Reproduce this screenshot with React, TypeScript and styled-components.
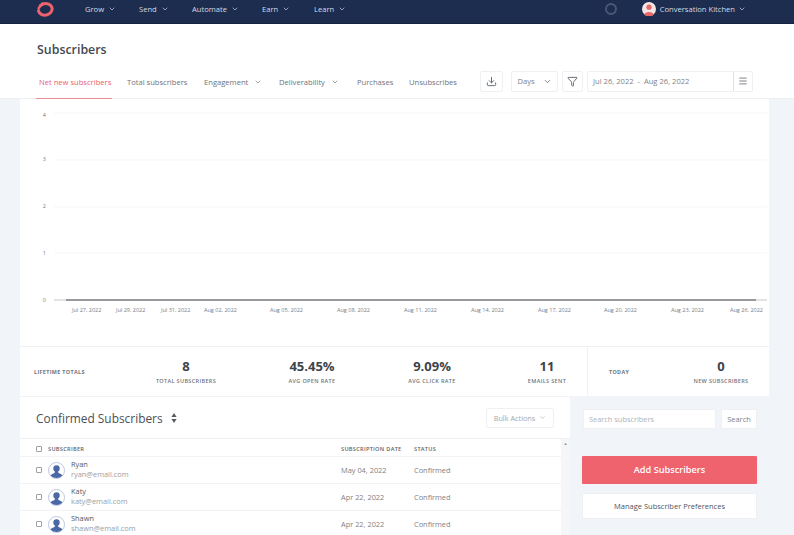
import React from 'react';
import styled, { createGlobalStyle } from 'styled-components';
import { ChevronDown, Download, Filter, Menu } from 'lucide-react';

const GlobalStyle = createGlobalStyle`
  html, body {
    margin: 0;
    padding: 0;
    background: #f1f5f9;
    font-family: "Open Sans", "Liberation Sans", sans-serif;
    overflow: hidden;
  }
  * { box-sizing: border-box; }
  svg { flex: none; }
`;

const Page = styled.div`
  width: 794px;
  height: 535px;
  overflow: hidden;
  background: #f1f5f9;
`;

const TopBar = styled.div`
  height: 24px;
  background: #1d2d4f;
  border-bottom: 1px solid #15223e;
  display: flex;
  align-items: center;
  padding: 0 48px 5px 36px;
  color: #d5dae3;
  font-size: 7.6px;
  font-weight: 500;
`;

const NavItem = styled.span<{ $width: number }>`
  display: flex;
  align-items: center;
  gap: 4px;
  width: ${({ $width }) => $width}px;
  white-space: nowrap;
`;

const NavList = styled.div`
  display: flex;
  margin-left: 31px;
`;

const Account = styled.div`
  display: flex;
  align-items: center;
  margin-left: auto;
`;

const Spinner = styled.svg`
  margin-right: 24px;
`;

const AccountName = styled.span`
  margin: 0 3px 0 4px;
  white-space: nowrap;
`;

const Header = styled.header`
  height: 75px;
  background: #fff;
  border-bottom: 1px solid #edf0f3;
  padding: 17px 0 0 36px;
`;

const Title = styled.h1`
  margin: 0 0 0 1px;
  height: 17px;
  font-size: 12.4px;
  line-height: 17px;
  font-weight: 600;
  color: #444a52;
`;

const TabRow = styled.div`
  display: flex;
  align-items: center;
  height: 41px;
`;

const Tab = styled.span<{ $active?: boolean; $width: number }>`
  display: flex;
  align-items: center;
  gap: 6px;
  flex: none;
  width: ${({ $width }) => $width}px;
  height: 41px;
  margin-right: ${({ $active }) => ($active ? 15 : 0)}px;
  padding: 7px 0 0 ${({ $active }) => ($active ? 3 : 0)}px;
  font-size: 7.6px;
  white-space: nowrap;
  color: ${({ $active }) => ($active ? '#e9626f' : '#6d737b')};
  border-bottom: 1px solid ${({ $active }) => ($active ? '#ef8d97' : 'transparent')};
`;

const Tools = styled.div`
  display: flex;
  align-items: center;
  height: 24px;
  margin-top: 5px;
  margin-left: 11px;
`;

const ToolBox = styled.div<{ $width: number; $left: number }>`
  width: ${({ $width }) => $width}px;
  margin-left: ${({ $left }) => $left}px;
  height: 21px;
  background: #fff;
  border: 1px solid #eef0f2;
  border-radius: 2px;
  display: flex;
  align-items: center;
  justify-content: center;
  gap: 8px;
  font-size: 7.6px;
  color: #7d838a;
  white-space: nowrap;
`;

const DateBox = styled(ToolBox)`
  justify-content: space-between;
  padding-left: 5px;
`;

const DateMenu = styled.span`
  width: 19px;
  height: 100%;
  border-left: 1px solid #dfe2e5;
  display: flex;
  align-items: center;
  justify-content: center;
  color: #666c74;
`;

const Main = styled.main`
  width: 749px;
  margin-left: 20px;
`;

const ChartPanel = styled.section`
  height: 247px;
  background: #fff;
`;

const Chart = styled.svg`
  display: block;
  font-family: "Open Sans", "Liberation Sans", sans-serif;
  font-size: 5.5px;
  fill: #777d84;
`;

const Stats = styled.section`
  height: 51px;
  background: #fff;
  border-top: 1px solid #eef1f4;
  border-bottom: 1px solid #f1f3f6;
  display: flex;
`;

const StatLabelCell = styled.div<{ $width: number; $left: number }>`
  width: ${({ $width }) => $width}px;
  padding-left: ${({ $left }) => $left}px;
  padding-top: 21px;
  font-size: 5.4px;
  font-weight: 700;
  letter-spacing: 0.35px;
  color: #6f757c;
  white-space: nowrap;
`;

const Stat = styled.div<{ $width: number; $left?: number }>`
  width: ${({ $width }) => $width}px;
  margin-left: ${({ $left }) => $left ?? 0}px;
  text-align: center;
  padding-top: 11px;
`;

const StatValue = styled.div`
  font-size: 13px;
  line-height: 17px;
  font-weight: 700;
  color: #3e444b;
`;

const StatName = styled.div`
  margin-top: 2px;
  font-size: 5.5px;
  line-height: 8px;
  font-weight: 600;
  letter-spacing: 0.35px;
  color: #6f757c;
  white-space: nowrap;
`;

const TodayGroup = styled.div`
  display: flex;
  flex: 1;
  border-left: 1px solid #eef1f4;
`;

const Lower = styled.section`
  display: flex;
  height: 138px;
`;

const ListPanel = styled.div`
  width: 550px;
  background: #fff;
`;

const ListHead = styled.div`
  height: 42px;
  display: flex;
  align-items: center;
  justify-content: space-between;
  padding: 0 16px;
  border-bottom: 1px solid #eef1f4;
`;

const ListTitle = styled.h2`
  margin: 0;
  display: flex;
  align-items: center;
  gap: 8px;
  font-size: 11.9px;
  font-weight: 400;
  color: #4a5058;
`;

const BulkButton = styled.div`
  width: 68px;
  height: 20px;
  border: 1px solid #eef0f2;
  border-radius: 2px;
  display: flex;
  align-items: center;
  justify-content: center;
  gap: 4px;
  font-size: 7.3px;
  color: #a3a8ae;
`;

const TableWrap = styled.div`
  display: flex;
`;

const Table = styled.div`
  width: 541px;
`;

const Scrollbar = styled.div`
  width: 9px;
  height: 96px;
  background: #f5f6f8;
  color: #8b9096;
  font-size: 4px;
  line-height: 9px;
  text-align: center;
`;

const Row = styled.div<{ $head?: boolean }>`
  display: grid;
  grid-template-columns: 321px 73px 1fr;
  align-items: center;
  height: ${({ $head }) => ($head ? 18 : 27)}px;
  padding-top: ${({ $head }) => ($head ? 2 : 0)}px;
  border-bottom: 1px solid #f1f3f5;
  font-size: ${({ $head }) => ($head ? 5.6 : 7.4)}px;
  font-weight: ${({ $head }) => ($head ? 600 : 400)};
  letter-spacing: ${({ $head }) => ($head ? 0.3 : 0)}px;
  color: ${({ $head }) => ($head ? '#5d6369' : '#7c8187')};
  white-space: nowrap;
`;

const Person = styled.div`
  display: flex;
  align-items: center;
  padding-left: 16px;
`;

const Check = styled.span`
  width: 6px;
  height: 6px;
  flex: none;
  border: 1px solid #9ca1a7;
  border-radius: 1px;
  margin-right: 6px;
`;

const Name = styled.div`
  font-size: 7.4px;
  line-height: 10.5px;
  color: #53585f;
`;

const Email = styled.div`
  font-size: 7.4px;
  line-height: 10.5px;
  color: #999ea4;
`;

const PersonText = styled.div`
  margin: 0 0 2px 6px;
`;

const Side = styled.aside`
  flex: 1;
  padding: 12px 12px 0 12px;
`;

const SearchRow = styled.div`
  display: flex;
  gap: 5px;
  padding-left: 1px;
`;

const SearchInput = styled.div`
  width: 133px;
  height: 20px;
  background: #fff;
  border: 1px solid #eef0f2;
  padding-left: 5px;
  font-size: 7.4px;
  line-height: 18px;
  color: #aeb3b8;
`;

const SearchButton = styled.div`
  width: 36px;
  height: 20px;
  background: #fff;
  border: 1px solid #eef0f2;
  text-align: center;
  font-size: 7.4px;
  line-height: 18px;
  color: #7c8187;
`;

const AddButton = styled.div`
  height: 28px;
  margin-top: 27px;
  background: #ef636f;
  border-radius: 1px;
  text-align: center;
  font-size: 9.2px;
  font-weight: 600;
  line-height: 28px;
  color: #fff;
`;

const ManageButton = styled.div`
  height: 26px;
  margin-top: 9px;
  background: #fff;
  border: 1px solid #eef0f2;
  text-align: center;
  font-size: 7.5px;
  font-weight: 500;
  line-height: 24px;
  color: #50565d;
`;

function Logo() {
  return (
    <svg width="18" height="18" viewBox="0 0 18 18" fill="none">
      <g transform="rotate(-14 9 9.5)">
        <path d="M5.4 4.6 A6.9 5.8 0 1 1 2.4 9" stroke="#ee626e" strokeWidth="3" strokeLinecap="round" />
      </g>
      <path d="M2.6 8.2 L6.6 3.2" stroke="#ee626e" strokeWidth="2.4" strokeLinecap="round" />
    </svg>
  );
}

function Avatar() {
  return (
    <svg width="14" height="14" viewBox="0 0 14 14">
      <circle cx="7" cy="7" r="7" fill="#f3e6e4" />
      <circle cx="7" cy="5.2" r="2.6" fill="#e8686a" />
      <path d="M2 12.5 C3 9 11 9 12 12.5 A7 7 0 0 1 2 12.5 Z" fill="#e8686a" />
    </svg>
  );
}

function UserIcon() {
  return (
    <svg width="17" height="17" viewBox="0 0 17 17">
      <circle cx="8.5" cy="8.5" r="8" fill="#fff" stroke="#9fb0d0" strokeWidth="0.7" />
      <circle cx="8.5" cy="6.4" r="3.2" fill="#4a68a5" />
      <path d="M7 9 L10 9 L10.4 11 C12.5 11.6 14 12.6 14.4 13.5 A8 8 0 0 1 2.6 13.5 C3 12.6 4.5 11.6 6.6 11 Z" fill="#4a68a5" />
    </svg>
  );
}

// y is the grid line, labelY the tick label centre; they drift apart near the top
const yTicks = [
  { label: '4', y: 14, labelY: 16 },
  { label: '3', y: 61, labelY: 60 },
  { label: '2', y: 108, labelY: 107 },
  { label: '1', y: 154, labelY: 154 },
  { label: '0', y: 201, labelY: 201 },
];

const xTicks = [
  { label: 'Jul 27, 2022', x: 52 },
  { label: 'Jul 29, 2022', x: 96 },
  { label: 'Jul 31, 2022', x: 141 },
  { label: 'Aug 02, 2022', x: 184 },
  { label: 'Aug 05, 2022', x: 250 },
  { label: 'Aug 08, 2022', x: 317 },
  { label: 'Aug 11, 2022', x: 384 },
  { label: 'Aug 14, 2022', x: 451 },
  { label: 'Aug 17, 2022', x: 518 },
  { label: 'Aug 20, 2022', x: 584 },
  { label: 'Aug 23, 2022', x: 651 },
  { label: 'Aug 26, 2022', x: 710 },
];

function SubscriberChart() {
  return (
    <Chart width="749" height="247" viewBox="0 0 749 247">
      {yTicks.map((t) => (
        <g key={t.label}>
          <text x="26" y={t.labelY + 2} textAnchor="end">{t.label}</text>
          <line x1="34" x2="747" y1={t.y} y2={t.y} stroke={t.label === '0' ? '#c4c6c9' : '#f1f2f4'} strokeWidth={t.label === '0' ? 1 : 0.7} />
        </g>
      ))}
      <line x1="46" x2="736" y1="201" y2="201" stroke="#7f8184" strokeWidth="1.6" />
      {xTicks.map((t) => (
        <text key={t.label} x={t.x} y="213">{t.label}</text>
      ))}
    </Chart>
  );
}

const subscribers = [
  { name: 'Ryan', email: 'ryan@email.com', date: 'May 04, 2022' },
  { name: 'Katy', email: 'katy@email.com', date: 'Apr 22, 2022' },
  { name: 'Shawn', email: 'shawn@email.com', date: 'Apr 22, 2022' },
];

export default function App() {
  return (
    <Page>
      <GlobalStyle />
      <TopBar>
        <Logo />
        <NavList>
          <NavItem $width={54}>Grow <ChevronDown size={8} /></NavItem>
          <NavItem $width={53}>Send <ChevronDown size={8} /></NavItem>
          <NavItem $width={70}>Automate <ChevronDown size={8} /></NavItem>
          <NavItem $width={52}>Earn <ChevronDown size={8} /></NavItem>
          <NavItem $width={40}>Learn <ChevronDown size={8} /></NavItem>
        </NavList>
        <Account>
          <Spinner width="14" height="14" viewBox="0 0 14 14" fill="none">
            <circle cx="7" cy="7" r="5" stroke="#4a5874" strokeWidth="2" />
          </Spinner>
          <Avatar />
          <AccountName>Conversation Kitchen</AccountName>
          <ChevronDown size={8} />
        </Account>
      </TopBar>
      <Header>
        <Title>Subscribers</Title>
        <TabRow>
          <Tab $active $width={76}>Net new subscribers</Tab>
          <Tab $width={77}>Total subscribers</Tab>
          <Tab $width={75}>Engagement <ChevronDown size={8} /></Tab>
          <Tab $width={78}>Deliverability <ChevronDown size={8} /></Tab>
          <Tab $width={52}>Purchases</Tab>
          <Tab $width={60}>Unsubscribes</Tab>
          <Tools>
            <ToolBox $width={23} $left={0}><Download size={11} color="#5d636a" /></ToolBox>
            <ToolBox $width={47} $left={8}>Days <ChevronDown size={9} color="#5d636a" /></ToolBox>
            <ToolBox $width={21} $left={4}><Filter size={11} color="#5d636a" /></ToolBox>
            <DateBox $width={166} $left={4}>
              Jul 26, 2022 &nbsp;-&nbsp; Aug 26, 2022
              <DateMenu><Menu size={10} /></DateMenu>
            </DateBox>
          </Tools>
        </TabRow>
      </Header>
      <Main>
        <ChartPanel>
          <SubscriberChart />
        </ChartPanel>
        <Stats>
          <StatLabelCell $width={95} $left={14}>LIFETIME TOTALS</StatLabelCell>
          <Stat $width={142}><StatValue>8</StatValue><StatName>TOTAL SUBSCRIBERS</StatName></Stat>
          <Stat $width={110}><StatValue>45.45%</StatValue><StatName>AVG OPEN RATE</StatName></Stat>
          <Stat $width={130}><StatValue>9.09%</StatValue><StatName>AVG CLICK RATE</StatName></Stat>
          <Stat $width={80} $left={10}><StatValue>11</StatValue><StatName>EMAILS SENT</StatName></Stat>
          <TodayGroup>
            <StatLabelCell $width={101} $left={21}>TODAY</StatLabelCell>
            <Stat $width={64}><StatValue>0</StatValue><StatName>NEW SUBSCRIBERS</StatName></Stat>
          </TodayGroup>
        </Stats>
        <Lower>
          <ListPanel>
            <ListHead>
              <ListTitle>
                Confirmed Subscribers
                <svg width="6" height="10" viewBox="0 0 6 10" fill="#555b62">
                  <path d="M3 0 L5.6 4 L0.4 4 Z" />
                  <path d="M3 10 L5.6 6 L0.4 6 Z" />
                </svg>
              </ListTitle>
              <BulkButton>Bulk Actions <ChevronDown size={7} /></BulkButton>
            </ListHead>
            <TableWrap>
              <Table>
                <Row $head>
                  <Person><Check />SUBSCRIBER</Person>
                  <span>SUBSCRIPTION DATE</span>
                  <span>STATUS</span>
                </Row>
                {subscribers.map((s) => (
                  <Row key={s.name}>
                    <Person>
                      <Check />
                      <UserIcon />
                      <PersonText>
                        <Name>{s.name}</Name>
                        <Email>{s.email}</Email>
                      </PersonText>
                    </Person>
                    <span>{s.date}</span>
                    <span>Confirmed</span>
                  </Row>
                ))}
              </Table>
              <Scrollbar>▲</Scrollbar>
            </TableWrap>
          </ListPanel>
          <Side>
            <SearchRow>
              <SearchInput>Search subscribers</SearchInput>
              <SearchButton>Search</SearchButton>
            </SearchRow>
            <AddButton>Add Subscribers</AddButton>
            <ManageButton>Manage Subscriber Preferences</ManageButton>
          </Side>
        </Lower>
      </Main>
    </Page>
  );
}
